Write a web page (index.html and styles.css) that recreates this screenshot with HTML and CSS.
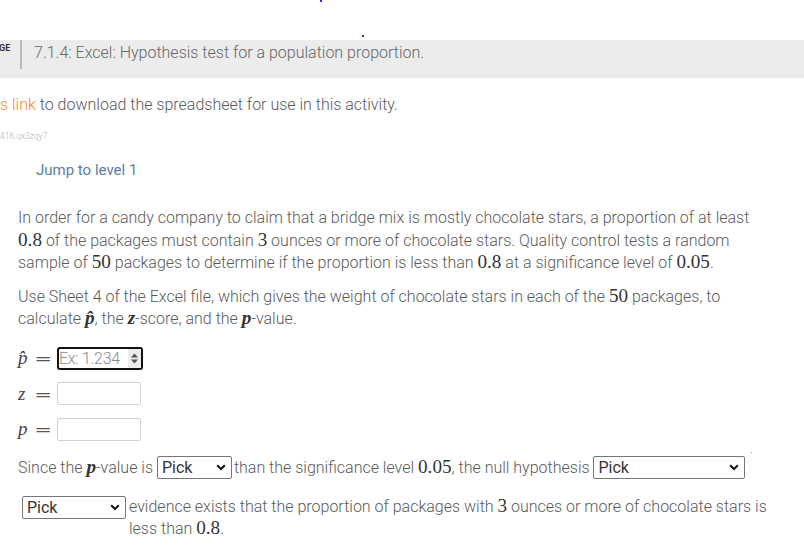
FILE: index.html
```html
<!DOCTYPE html>
<html>
<head>
<meta charset="utf-8">
<link rel="stylesheet" href="styles.css">
</head>
<body>
<div class="page">
  <div class="topbar">
    <span class="dot dot-a"></span>
    <span class="dot dot-b"></span>
  </div>
  <div class="header">
    <span class="crumb">GE</span>
    <span class="divider"></span>
    <span class="title">7.1.4: Excel: Hypothesis test for a population proportion.</span>
  </div>
  <p class="download"><a class="link">s link</a> to download the spreadsheet for use in this activity.</p>
  <div class="code-id">416.qx3zqy7</div>
  <div class="jump">Jump to level 1</div>

  <div class="question">
    <p class="para">In order for a candy company to claim that a bridge mix is mostly chocolate stars, a proportion of at least <span class="m">0.8</span> of the packages must contain <span class="m">3</span> ounces or more of chocolate stars. Quality control tests a random sample of <span class="m">50</span> packages to determine if the proportion is less than <span class="m">0.8</span> at a significance level of <span class="m">0.05</span>.</p>
    <p class="para">Use Sheet 4 of the Excel file, which gives the weight of chocolate stars in each of the <span class="m">50</span> packages, to calculate <span class="mi">p&#770;</span>, the <span class="mi">z</span>-score, and the <span class="mi">p</span>-value.</p>

    <div class="answers">
      <div class="answer-row">
        <span class="label"><span class="lv">p&#770;</span><span class="eq">=</span></span>
        <div class="num-input focused">
          <span class="placeholder">Ex: 1.234</span>
          <span class="spinner">
            <svg width="9" height="13" viewBox="0 0 9 13"><path d="M1 5.5 L4.5 1.5 L8 5.5 Z M1 7.5 L4.5 11.5 L8 7.5 Z" fill="#555"/></svg>
          </span>
        </div>
      </div>
      <div class="answer-row">
        <span class="label"><span class="lv">z</span><span class="eq">=</span></span>
        <div class="num-input"></div>
      </div>
      <div class="answer-row">
        <span class="label"><span class="lv">p</span><span class="eq">=</span></span>
        <div class="num-input"></div>
      </div>
    </div>

    <div class="line-one">Since the <span class="mi">p</span>-value is <span class="pick w-short">Pick<svg class="chev" width="10" height="7" viewBox="0 0 10 7"><path d="M1.2 1.2 L5 5 L8.8 1.2" fill="none" stroke="#111" stroke-width="2"/></svg></span>than the significance level <span class="m">0.05</span>, the null hypothesis <span class="pick w-long">Pick<svg class="chev" width="10" height="7" viewBox="0 0 10 7"><path d="M1.2 1.2 L5 5 L8.8 1.2" fill="none" stroke="#111" stroke-width="2"/></svg></span><span class="dot dot-c"></span></div>

    <div class="line-two">
      <span class="pick w-mid">Pick<svg class="chev" width="10" height="7" viewBox="0 0 10 7"><path d="M1.2 1.2 L5 5 L8.8 1.2" fill="none" stroke="#111" stroke-width="2"/></svg></span>
      <span class="evidence">evidence exists that the proportion of packages with <span class="m">3</span> ounces or more of chocolate stars is less than <span class="m">0.8</span>.</span>
    </div>
  </div>
</div>
</body>
</html>
```

FILE: styles.css
```css
* { box-sizing: border-box; }
html, body { margin: 0; padding: 0; background: #fff; }
body {
  font-family: Roboto, "Liberation Sans", sans-serif;
  font-weight: 300;
  color: #5a5a5a;
  width: 804px;
  height: 560px;
  overflow: hidden;
}
.page { position: relative; }

.topbar { height: 40px; position: relative; }
.dot { position: absolute; width: 2px; height: 2px; background: #2b2bff; }
.dot-a { left: 320px; top: 0; }
.dot-b { left: 362px; top: 35px; }

.header {
  height: 38px;
  background: #ececec;
  display: flex;
  align-items: flex-start;
}
.crumb {
  font-size: 9px;
  font-weight: 700;
  color: #333;
  width: 21px;
  padding-top: 3px;
  margin-left: -1px;
}
.divider {
  width: 2px;
  height: 29px;
  background: #b9b9b9;
}
.title {
  margin-left: 12px;
  padding-top: 4px;
  font-size: 16px;
  font-weight: 300;
  color: #666;
  line-height: 18px;
}

.download {
  margin: 17px 0 0 0;
  font-size: 16px;
  line-height: 19px;
  color: #5a5a5a;
}
.link { color: #f5891f; }

.code-id {
  margin-top: 17px;
  font-size: 8.5px;
  color: #b5b5b5;
  line-height: 10px;
}

.jump {
  margin: 20px 0 0 36px;
  font-size: 15px;
  font-weight: 400;
  color: #5b7ea5;
  line-height: 18px;
}

.question { padding: 28px 0 0 18px; }
.para {
  margin: 0 0 11px 0;
  font-size: 16px;
  line-height: 22.5px;
  width: 755px;
}
.m {
  font-family: "Liberation Serif", "DejaVu Serif", serif;
  font-weight: 400;
  font-size: 1.2em;
  line-height: 1;
  color: #333;
}
.mi {
  font-family: "Liberation Serif", "DejaVu Serif", serif;
  font-style: italic;
  font-weight: 700;
  font-size: 1.2em;
  line-height: 1;
  color: #333;
}

.answers {
  display: flex;
  flex-direction: column;
  gap: 12.5px;
  margin-top: 16px;
}
.answer-row {
  display: flex;
  align-items: center;
  height: 23px;
}
.label {
  width: 39px;
  display: flex;
  align-items: center;
  gap: 7px;
}
.lv {
  font-family: "Liberation Serif", "DejaVu Serif", serif;
  font-style: italic;
  font-size: 19px;
  color: #444;
  width: 11px;
}
.eq {
  font-family: "DejaVu Serif", serif;
  font-size: 17px;
  color: #555;
  transform: scaleX(1.25);
}
.num-input {
  width: 84px;
  height: 23px;
  border: 1px solid #c9d3d8;
  border-radius: 2px;
  display: flex;
  align-items: center;
}
.num-input.focused {
  width: 86px;
  border: 2px solid #111;
  border-radius: 3px;
  padding-left: 0;
  justify-content: space-between;
}
.placeholder {
  font-size: 16px;
  color: #8a8a8a;
  letter-spacing: -0.3px;
  white-space: nowrap;
}
.spinner {
  width: 13px;
  height: 19px;
  background: #ececec;
  display: flex;
  align-items: center;
  justify-content: center;
  flex: none;
}

.line-one {
  margin-top: 15px;
  font-size: 16px;
  line-height: 23px;
  position: relative;
  white-space: nowrap;
}
.pick {
  display: inline-flex;
  vertical-align: middle;
  align-items: center;
  justify-content: space-between;
  height: 23px;
  border: 1px solid #767676;
  border-radius: 2px;
  padding: 0 5px 0 4px;
  font-size: 16px;
  font-weight: 400;
  color: #333;
  background: #fff;
}
.w-short { width: 75px; margin: -2px 2px 0 0; }
.w-long { width: 152px; margin: -2px 0 0 0; }
.w-mid { width: 104px; flex: none; }
.dot-c { left: 733px; top: -4px; width: 1px; height: 1px; background: #999; }

.line-two {
  margin: 17px 0 0 4px;
  display: flex;
  align-items: flex-start;
  gap: 3px;
}
.evidence {
  font-size: 16px;
  line-height: 22px;
  width: 645px;
}
```
